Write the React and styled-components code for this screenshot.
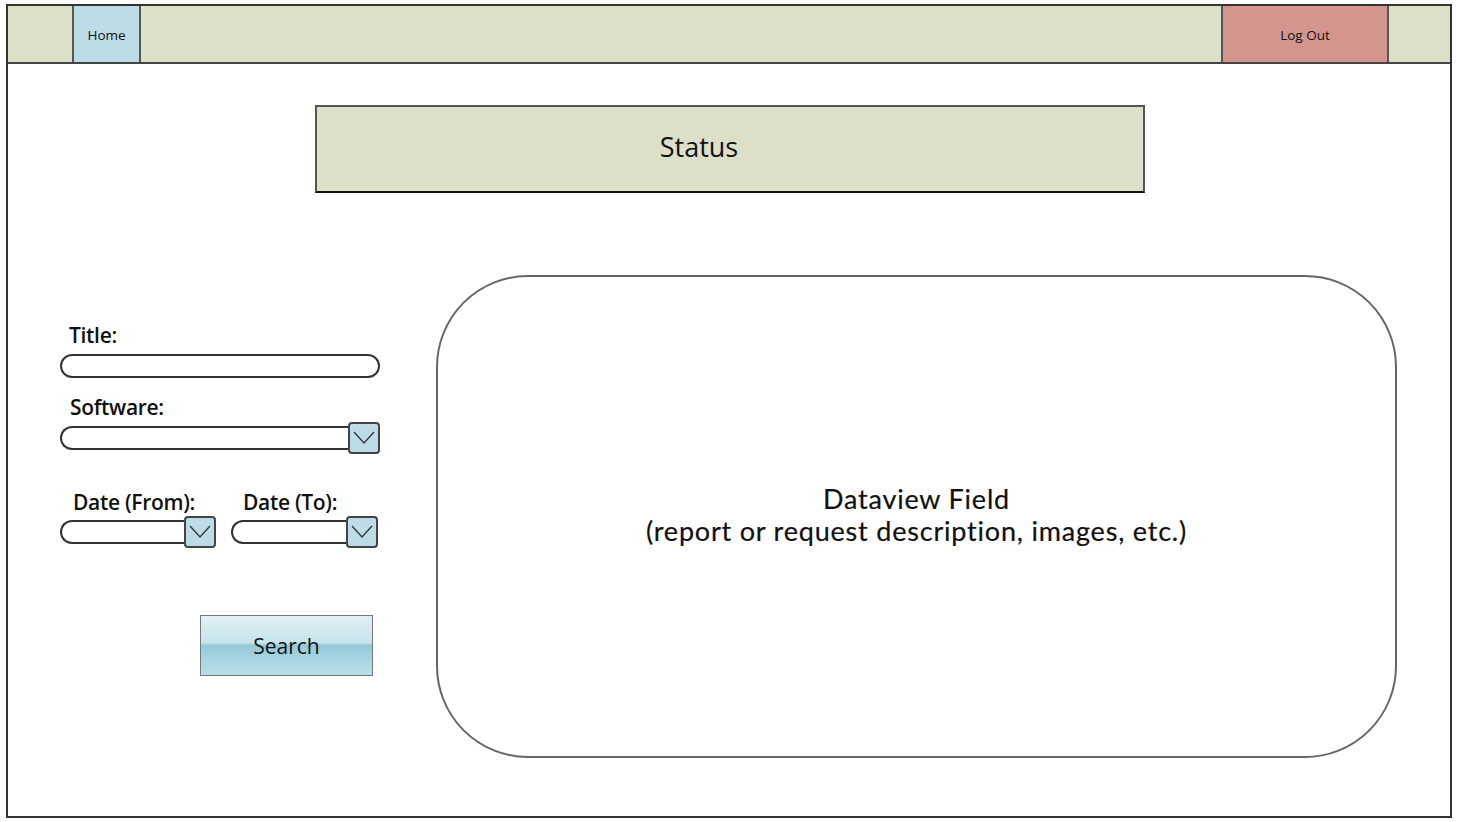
import React from 'react';
import styled, { createGlobalStyle } from 'styled-components';

const Global = createGlobalStyle`
  body {
    margin: 0;
    background: #fff;
    font-family: "Open Sans", "Liberation Sans", sans-serif;
    color: #111;
  }
`;

const Frame = styled.div`
  margin: 4px 0 0 6px;
  width: 1446px;
  height: 814px;
  box-sizing: border-box;
  border: 2px solid #333;
  display: flex;
  flex-direction: column;
`;

const TopBar = styled.div`
  height: 58px;
  box-sizing: border-box;
  background: #dde0c9;
  border-bottom: 2px solid #444;
  display: flex;
`;

const Tab = styled.div`
  width: ${p => p.w}px;
  margin-left: ${p => p.ml || 0}px;
  margin-right: ${p => p.mr || 0}px;
  background: ${p => p.bg};
  border-left: 2px solid #555;
  border-right: 2px solid #555;
  box-sizing: border-box;
  display: flex;
  align-items: center;
  justify-content: center;
  font-size: 13.5px;
  padding-top: 1px;
`;

const Spacer = styled.div`
  flex: 1;
`;

const Main = styled.div`
  flex: 1;
  display: flex;
  flex-direction: column;
`;

const StatusBox = styled.div`
  margin: 41px 0 0 307px;
  width: 830px;
  height: 88px;
  box-sizing: border-box;
  background: #dde0c9;
  border: 2px solid #555;
  border-bottom-color: #111;
  display: flex;
  align-items: center;
  justify-content: center;
  padding: 0 62px 6px 0;
  font-size: 27px;
`;

const Row = styled.div`
  margin-top: 82px;
  display: flex;
  align-items: flex-start;
`;

const Form = styled.div`
  width: 320px;
  margin-left: 52px;
  padding-top: 47px;
  display: flex;
  flex-direction: column;
`;

const Label = styled.div`
  font-size: 21px;
  font-weight: 600;
  margin-left: ${p => p.ml || 9}px;
  line-height: 26px;
  margin-bottom: ${p => p.mb || 2}px;
  letter-spacing: -0.3px;
`;

const Field = styled.div`
  display: flex;
  align-items: center;
  width: ${p => p.w}px;
  height: 32px;
  margin-bottom: ${p => p.mb || 0}px;
`;

const Input = styled.div`
  flex: 1;
  height: 24px;
  box-sizing: border-box;
  border: 2px solid #333;
  border-radius: 12px;
  background: #fff;
  ${p => p.withBtn && `
    border-top-right-radius: 0;
    border-bottom-right-radius: 0;
    border-right: none;
  `}
`;

const DropBtn = styled.div`
  width: 32px;
  height: 32px;
  box-sizing: border-box;
  background: #bedce7;
  border: 2px solid #444;
  border-radius: 4px;
  display: flex;
  align-items: center;
  justify-content: center;
`;

const DateRow = styled.div`
  display: flex;
  margin-top: 35px;
  gap: 15px;
`;

const DateCol = styled.div`
  display: flex;
  flex-direction: column;
`;

const SearchBtn = styled.div`
  margin: 67px 0 0 140px;
  width: 173px;
  height: 61px;
  box-sizing: border-box;
  border: 1px solid #777;
  background: linear-gradient(to bottom, #e0f0f5 0%, #c7e4ec 45%, #94c9d9 50%, #a9d6e3 75%, #b6dfe9 100%);
  display: flex;
  align-items: center;
  justify-content: center;
  font-size: 21px;
`;

const DataView = styled.div`
  margin-left: 56px;
  width: 961px;
  height: 483px;
  box-sizing: border-box;
  border: 2px solid #666;
  border-radius: 92px;
  display: flex;
  flex-direction: column;
  align-items: center;
  justify-content: center;
  gap: 0;
  font-family: "Lato", "Open Sans", sans-serif;
  font-size: 27px;
  line-height: 32px;
  letter-spacing: 0.8px;
  text-align: center;
  padding-bottom: 4px;
  -webkit-text-stroke: 0.2px #111;
`;

const Chevron = () => (
  <svg width="22" height="14" viewBox="0 0 22 14">
    <polyline points="1,1 11,12 21,1" fill="none" stroke="#333" strokeWidth="1.3" />
  </svg>
);

const Select = ({ w, mb }) => (
  <Field w={w} mb={mb}>
    <Input withBtn />
    <DropBtn><Chevron /></DropBtn>
  </Field>
);

export default function App() {
  return (
    <>
      <Global />
      <Frame>
        <TopBar>
          <Tab ml={64} w={69} bg="#bedce7">Home</Tab>
          <Spacer />
          <Tab w={168} mr={61} bg="#d4958f">Log Out</Tab>
        </TopBar>
        <Main>
          <StatusBox>Status</StatusBox>
          <Row>
            <Form>
              <Label>Title:</Label>
              <Field w={320} mb={12}>
                <Input />
              </Field>
              <Label ml={10}>Software:</Label>
              <Select w={320} />
              <DateRow>
                <DateCol>
                  <Label ml={13} mb={1}>Date (From):</Label>
                  <Select w={156} />
                </DateCol>
                <DateCol>
                  <Label ml={12} mb={1}>Date (To):</Label>
                  <Select w={147} />
                </DateCol>
              </DateRow>
              <SearchBtn>Search</SearchBtn>
            </Form>
            <DataView>
              <div>Dataview Field</div>
              <div>(report or request description, images, etc.)</div>
            </DataView>
          </Row>
        </Main>
      </Frame>
    </>
  );
}
